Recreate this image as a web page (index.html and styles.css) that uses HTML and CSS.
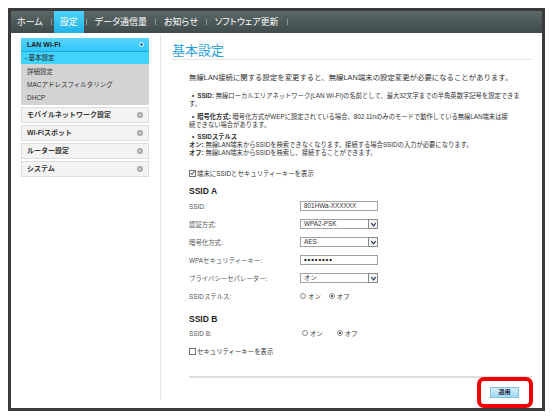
FILE: index.html
```html
<!DOCTYPE html>
<html>
<head>
    <meta charset="utf-8">
    <title>基本設定</title>
    <link rel="stylesheet" href="styles.css">
</head>
<body>
    <div class="frame">
        <div class="nav">
            <span class="nav-item">ホーム</span><span class="sep"></span>
            <span class="nav-item active">設定</span><span class="sep"></span>
            <span class="nav-item">データ通信量</span><span class="sep"></span>
            <span class="nav-item">お知らせ</span><span class="sep"></span>
            <span class="nav-item">ソフトウェア更新</span><span class="sep"></span>
        </div>

        <div class="content">
            <div class="sidebar">
                <div class="menu-head">LAN Wi-Fi<span class="dot-open"></span></div>
                <div class="menu-current">→基本設定</div>
                <div class="submenu">
                    <div class="sub-item">詳細設定</div>
                    <div class="sub-item">MACアドレスフィルタリング</div>
                    <div class="sub-item">DHCP</div>
                </div>
                <div class="menu-item">モバイルネットワーク設定<span class="dot"></span></div>
                <div class="menu-item">Wi-Fiスポット<span class="dot"></span></div>
                <div class="menu-item">ルーター設定<span class="dot"></span></div>
                <div class="menu-item">システム<span class="dot"></span></div>
            </div>

            <div class="main">
                <h1>基本設定</h1>
                <div class="body-text">
                    <p class="intro">無線LAN接続に関する設定を変更すると、無線LAN端末の設定変更が必要になることがあります。</p>

                    <div class="notes">
                        <p class="note"><b>SSID:</b> 無線ローカルエリアネットワーク(LAN Wi-Fi)の名前として、最大32文字までの半角英数字記号を設定できま<br>す。</p>
                        <p class="note"><b>暗号化方式:</b> 暗号化方式がWEPに設定されている場合、802.11nのみのモードで動作している無線LAN端末は接<br>続できない場合があります。</p>
                        <p class="note"><b>SSIDステルス</b><br>
                            <b>オン:</b> 無線LAN端末からSSIDを検索できなくなります。接続する場合SSIDの入力が必要になります。<br>
                            <b>オフ:</b> 無線LAN端末からSSIDを検索し、接続することができます。</p>
                    </div>

                    <div class="check-row check-first"><span class="box checked"><svg viewBox="0 0 8 8" width="6" height="6"><path d="M1 4 L3 6.5 L7.2 1" fill="none" stroke="#1a1a5a" stroke-width="1.4"/></svg></span>端末にSSIDとセキュリティーキーを表示</div>

                    <h2>SSID A</h2>
                    <div class="row">
                        <span class="label">SSID:</span>
                        <span class="field">801HWa-XXXXXX</span>
                    </div>
                    <div class="row">
                        <span class="label">認証方式:</span>
                        <span class="field select">WPA2-PSK<span class="arrow"><svg viewBox="0 0 8 8" width="7" height="7"><path d="M1.5 2.5 L4 5.5 L6.5 2.5" fill="none" stroke="#22335a" stroke-width="1.4"/></svg></span></span>
                    </div>
                    <div class="row">
                        <span class="label">暗号化方式:</span>
                        <span class="field select">AES<span class="arrow"><svg viewBox="0 0 8 8" width="7" height="7"><path d="M1.5 2.5 L4 5.5 L6.5 2.5" fill="none" stroke="#22335a" stroke-width="1.4"/></svg></span></span>
                    </div>
                    <div class="row">
                        <span class="label">WPAセキュリティーキー:</span>
                        <span class="field password">••••••••</span>
                    </div>
                    <div class="row">
                        <span class="label">プライバシーセパレーター:</span>
                        <span class="field select">オン<span class="arrow"><svg viewBox="0 0 8 8" width="7" height="7"><path d="M1.5 2.5 L4 5.5 L6.5 2.5" fill="none" stroke="#22335a" stroke-width="1.4"/></svg></span></span>
                    </div>
                    <div class="row">
                        <span class="label">SSIDステルス:</span>
                        <span class="radio-opt"><span class="radio"></span>オン</span>
                        <span class="radio-opt"><span class="radio on"></span>オフ</span>
                    </div>

                    <h2 class="second">SSID B</h2>
                    <div class="row short">
                        <span class="label">SSID B:</span>
                        <span class="radio-opt wide"><span class="radio"></span>オン</span>
                        <span class="radio-opt"><span class="radio on"></span>オフ</span>
                    </div>

                    <div class="check-row"><span class="box"></span>セキュリティーキーを表示</div>

                    <div class="actions">
                        <span class="apply">適用</span>
                    </div>
                </div>
            </div>
        </div>

        <div class="highlight-box"></div>
    </div>
</body>
</html>
```

FILE: styles.css
```css
body {
    margin: 0;
    background: #fff;
    font-family: "Liberation Sans", "Noto Sans CJK JP", sans-serif;
    color: #333;
}
.frame {
    position: relative;
    margin: 8px 0 0 8px;
    width: 531px;
    height: 397px;
    border: 3px solid #3a3a3a;
    background: #fff;
}

/* top navigation */
.nav {
    display: flex;
    align-items: center;
    height: 22px;
    background: linear-gradient(#5c6868, #3f4a4a);
}
.nav-item {
    height: 22px;
    line-height: 22px;
    padding: 0 6px;
    font-size: 9px;
    color: #fff;
    font-feature-settings: "palt";
}
.nav-item.active {
    background: linear-gradient(#4cd2fb, #21b2e8);
}
.sep {
    width: 1px;
    height: 6px;
    margin: 0 2px;
    background: #8c9898;
}

.content {
    display: flex;
    height: 375px;
}

/* left menu */
.sidebar {
    width: 128px;
    margin: 5px 0 0 10px;
}
.menu-head {
    position: relative;
    height: 13px;
    line-height: 13px;
    padding-left: 6px;
    font-size: 7px;
    font-weight: bold;
    color: #222;
    background: linear-gradient(#5ad6fd, #2ec6f9);
    border-bottom: 1px solid #20a8dc;
}
.dot-open {
    position: absolute;
    right: 5px;
    top: 4px;
    width: 3px;
    height: 3px;
    border: 1px solid #fff;
    border-radius: 50%;
    background: #1a7fd0;
}
.menu-current {
    height: 12px;
    line-height: 12px;
    padding-left: 1px;
    font-size: 6.5px;
    color: #222;
    background: #42d3fd;
}
.submenu {
    background: #d3d3d3;
    padding: 1px 0;
}
.sub-item {
    height: 13px;
    line-height: 13px;
    padding-left: 6px;
    font-size: 6.5px;
    color: #333;
}
.menu-item {
    position: relative;
    height: 14px;
    line-height: 14px;
    margin-top: 2px;
    padding-left: 5px;
    font-size: 7px;
    font-weight: bold;
    color: #333;
    background: #f3f3f3;
    border: 1px solid #dddddd;
}
.dot {
    position: absolute;
    right: 5px;
    top: 4px;
    width: 6px;
    height: 6px;
    border-radius: 50%;
    background: #a9a9a9;
}
.dot::after {
    content: "";
    position: absolute;
    left: 2px;
    top: 1.5px;
    border-left: 2.5px solid #fff;
    border-top: 1.5px solid transparent;
    border-bottom: 1.5px solid transparent;
}

/* main area */
.main {
    flex: 1;
    margin: 2px 0 8px 11px;
    padding: 0 10px 0 11px;
    border-left: 1px solid #e4e4e4;
}
h1 {
    margin: 7px 0 0;
    height: 17px;
    line-height: 17px;
    font-size: 13px;
    font-weight: normal;
    color: #2a9fd8;
    border-bottom: 1px solid #e4e4e4;
}
.body-text {
    padding-left: 17px;
}
.intro {
    margin: 13px 0 0;
    line-height: 10px;
    font-size: 7.4px;
    color: #333;
}
.note {
    margin: 5px 0 0;
    line-height: 8px;
    font-size: 6.3px;
    color: #333;
    white-space: nowrap;
}
.note::before {
    content: "•";
    margin: 0 3px;
    font-weight: bold;
}
.note:first-child {
    margin-top: 9px;
}
.note:last-child {
    margin-top: 4px;
}

.check-row {
    display: flex;
    align-items: center;
    height: 10px;
    margin-top: 5px;
    font-size: 6.4px;
    color: #333;
}
.check-row.check-first {
    margin-top: 11px;
}
.box {
    display: inline-flex;
    align-items: center;
    justify-content: center;
    width: 5px;
    height: 5px;
    margin-right: 1px;
    border: 1px solid #6e6e6e;
    background: #fff;
}

h2 {
    margin: 7px 0 0;
    height: 12px;
    line-height: 12px;
    font-size: 8.5px;
    font-weight: bold;
    color: #222;
}
h2.second {
    margin-top: 8px;
}

.row {
    display: flex;
    align-items: center;
    height: 18px;
}
.row.short {
    height: 16px;
}
.label {
    width: 111px;
    font-size: 6.4px;
    color: #555;
}
.field {
    position: relative;
    box-sizing: border-box;
    width: 78px;
    height: 10px;
    line-height: 8px;
    padding-left: 3px;
    font-size: 6.4px;
    color: #333;
    border: 1px solid #a3a3a3;
    background: #fff;
}
.field.password {
    font-size: 8px;
    font-weight: bold;
    letter-spacing: 0.8px;
    color: #222;
}
.arrow {
    position: absolute;
    right: -1px;
    top: -1px;
    box-sizing: border-box;
    width: 10px;
    height: 10px;
    display: flex;
    align-items: center;
    justify-content: center;
    border: 1px solid #8a8a8a;
    background: #f4f4f4;
}
.radio-opt {
    display: flex;
    align-items: center;
    margin-right: 8px;
    font-size: 6.4px;
    color: #333;
}
.radio-opt.wide {
    margin-right: 14px;
    margin-left: 2px;
}
.radio {
    position: relative;
    box-sizing: border-box;
    width: 6px;
    height: 6px;
    margin-right: 2px;
    border: 1px solid #8a8a8a;
    border-radius: 50%;
    background: #fff;
}
.radio.on::after {
    content: "";
    position: absolute;
    left: 1px;
    top: 1px;
    width: 2px;
    height: 2px;
    border-radius: 50%;
    background: #222;
}

.actions {
    display: flex;
    justify-content: flex-end;
    margin-top: 20px;
    padding-right: 13px;
    border-top: 2px solid #dedede;
}
.apply {
    box-sizing: border-box;
    width: 29px;
    height: 11px;
    margin-top: 9px;
    line-height: 9px;
    text-align: center;
    font-size: 6px;
    font-weight: bold;
    color: #1a2440;
    background: linear-gradient(#d4eefc, #9fd8f6);
    border: 1px solid #86c0e0;
}

/* red annotation frame around the apply button */
.highlight-box {
    position: absolute;
    left: 466px;
    top: 366px;
    box-sizing: border-box;
    width: 56px;
    height: 31px;
    border: 4px solid #f00000;
    border-radius: 7px;
}
```
